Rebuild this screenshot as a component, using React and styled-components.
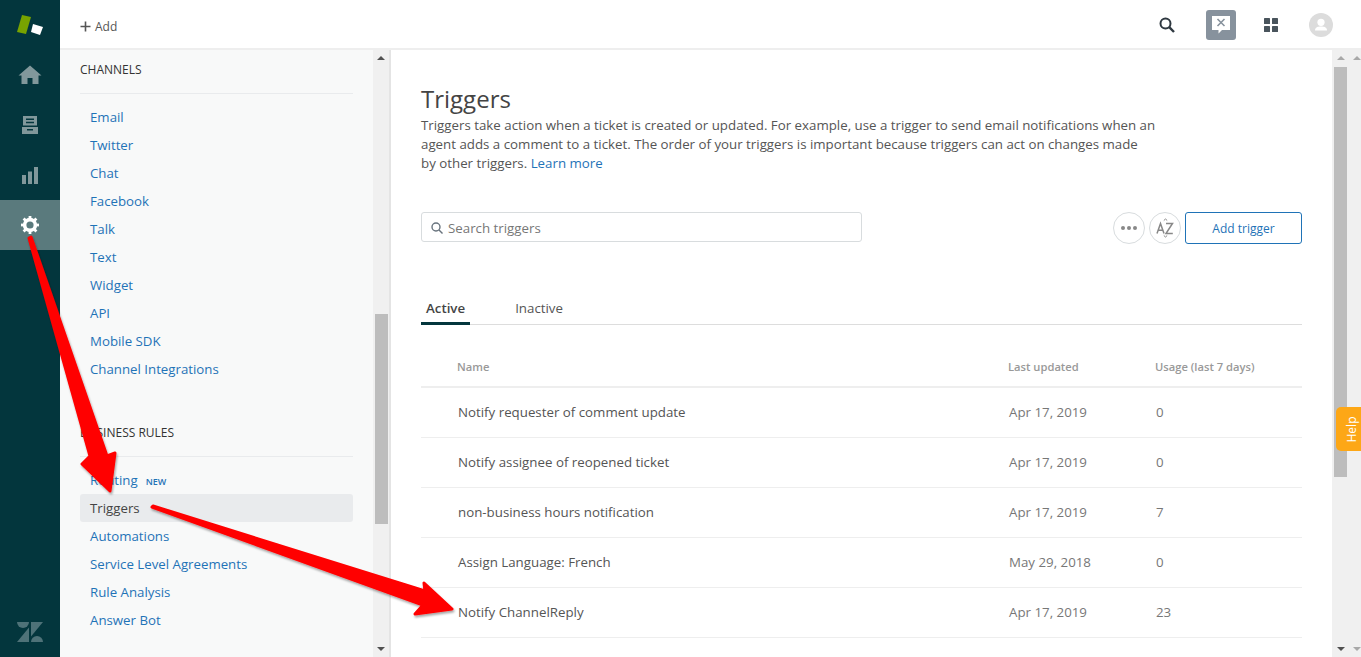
import styled, { createGlobalStyle } from "styled-components";
import { useState } from "react";

const GlobalStyle = createGlobalStyle`
  html, body {
    margin: 0;
    height: 100%;
    overflow: hidden;
    background: #fff;
  }
  * {
    box-sizing: border-box;
  }
  body {
    font-family: "Open Sans", "Noto Sans", sans-serif;
    font-size: 14px;
    color: #555;
  }
`;

const Page = styled.div`
  position: relative;
  display: flex;
  width: 1361px;
  height: 657px;
  overflow: hidden;
`;

const Rail = styled.nav`
  width: 60px;
  flex-shrink: 0;
  display: flex;
  flex-direction: column;
  background: #03363d;
`;
const RailLogo = styled.div`
  height: 50px;
  display: flex;
  align-items: center;
  justify-content: center;
`;
const RailItem = styled.div`
  height: 50px;
  display: flex;
  align-items: center;
  justify-content: center;
  background: ${(p) => (p.$active ? "#5a7a7d" : "transparent")};
  color: ${(p) => (p.$active ? "#fff" : "#81989b")};
`;
const RailFooter = styled.div`
  margin-top: auto;
  height: 35px;
  display: flex;
  justify-content: center;
  color: #4e7278;
`;

const Column = styled.div`
  flex: 1;
  min-width: 0;
  display: flex;
  flex-direction: column;
`;

const TopBar = styled.header`
  height: 50px;
  flex-shrink: 0;
  display: flex;
  align-items: center;
  padding: 2px 25px 0 20px;
  background: #fff;
  border-bottom: 2px solid #eee;
`;
const AddLink = styled.div`
  display: flex;
  align-items: center;
  gap: 4px;
  font-size: 12px;
  color: #555;
  padding-top: 3px;
`;
const TopIcons = styled.div`
  margin-left: auto;
  display: flex;
  align-items: center;
`;
const TopIcon = styled.div`
  width: 30px;
  height: 30px;
  display: flex;
  align-items: center;
  justify-content: center;
  margin-left: ${(p) => p.$gap}px;
  border-radius: 3px;
  background: ${(p) => p.$bg || "transparent"};
`;

const Body = styled.div`
  flex: 1;
  min-height: 0;
  display: flex;
`;

const Sidebar = styled.aside`
  width: 331px;
  flex-shrink: 0;
  display: flex;
  background: #f8f9f9;
  border-right: 2px solid #e4e4e4;
`;
const SideContent = styled.div`
  flex: 1;
  min-width: 0;
  padding: 0 20px 0 20px;
`;
const SideTitle = styled.h3`
  margin: 0;
  height: 44px;
  padding-top: 11px;
  font-size: 12px;
  line-height: 18px;
  font-weight: 500;
  color: #333;
  text-transform: uppercase;
  border-bottom: 1px solid #e9ebed;
`;
const SideList = styled.ul`
  list-style: none;
  margin: 0;
  padding: 9px 0 0;
  & + ${SideTitle} {
    margin-top: 30px;
  }
`;
const SideItem = styled.li`
  height: 28px;
  padding-left: 10px;
  display: flex;
  align-items: center;
  gap: 8px;
  border-radius: 3px;
  font-size: 13.25px;
  color: ${(p) => (p.$active ? "#444" : "#1f73b7")};
  background: ${(p) => (p.$active ? "#e9ebed" : "transparent")};
`;
const NewTag = styled.span`
  font-size: 9px;
  font-weight: 600;
  color: #1f73b7;
  padding-top: 2px;
`;

const Scrollbar = styled.div`
  width: ${(p) => p.$width}px;
  flex-shrink: 0;
  display: flex;
  flex-direction: column;
  align-items: center;
  background: #f0f0f0;
`;
const ScrollSpacer = styled.div`
  height: ${(p) => p.$height}px;
  flex-shrink: 0;
`;
const ScrollArrow = styled.div`
  width: 0;
  height: 0;
  margin: 6px 0;
  flex-shrink: 0;
  border-left: 4px solid transparent;
  border-right: 4px solid transparent;
  ${(p) =>
    p.$down
      ? `border-top: 4px solid ${p.$color};`
      : `border-bottom: 4px solid ${p.$color};`}
`;
const ScrollThumb = styled.div`
  width: 13px;
  height: ${(p) => p.$height}px;
  flex-shrink: 0;
  background: #bdbdbd;
`;
const ScrollFill = styled.div`
  flex: 1;
`;

const Main = styled.main`
  flex: 0 0 941px;
  padding: 34px 30px 0 30px;
  background: #fff;
`;
const Title = styled.h1`
  margin: 0;
  font-size: 24px;
  line-height: 30px;
  font-weight: 400;
  color: #444;
`;
const Description = styled.p`
  margin: 2px 0 0;
  font-size: 13.3px;
  line-height: 19px;
  color: #555;
  a {
    color: #1f73b7;
    text-decoration: none;
  }
`;
const ToolRow = styled.div`
  display: flex;
  align-items: flex-start;
  margin-top: 39px;
  height: 32px;
`;
const SearchBox = styled.div`
  width: 441px;
  height: 30px;
  display: flex;
  align-items: center;
  gap: 5px;
  padding: 1px 0 0 9px;
  border: 1px solid #d8dcde;
  border-radius: 3px;
  font-size: 13.3px;
  color: #777;
`;
const CircleButton = styled.div`
  width: 32px;
  height: 32px;
  display: flex;
  align-items: center;
  justify-content: center;
  margin-left: ${(p) => p.$gap}px;
  border: 1px solid #d8dcde;
  border-radius: 50%;
  color: #888;
`;
const AddButton = styled.div`
  width: 117px;
  height: 32px;
  margin-left: 4px;
  padding-top: 1px;
  display: flex;
  align-items: center;
  justify-content: center;
  border: 1px solid #1f73b7;
  border-radius: 3px;
  font-size: 12px;
  color: #1f73b7;
`;

const Tabs = styled.div`
  display: flex;
  margin-top: 48px;
  height: 33px;
  border-bottom: 1px solid #ddd;
`;
const Tab = styled.div`
  height: 33px;
  padding: 7px 5px 0;
  margin-right: ${(p) => p.$gap}px;
  font-size: 13.3px;
  font-weight: ${(p) => (p.$active ? 600 : 400)};
  color: ${(p) => (p.$active ? "#444" : "#555")};
  border-bottom: ${(p) => (p.$active ? "3px solid #03363d" : "none")};
`;

const Row = styled.div`
  display: grid;
  grid-template-columns: 551px 147px 1fr;
  height: ${(p) => (p.$head ? "63px" : "50px")};
  align-items: center;
  padding-left: ${(p) => (p.$head ? "36px" : "37px")};
  padding-top: ${(p) => (p.$head ? "22px" : "0")};
  padding-bottom: ${(p) => (p.$head ? "0" : "2px")};
  border-bottom: ${(p) => (p.$head ? "2px solid #eee" : "1px solid #eee")};
  font-size: ${(p) => (p.$head ? "11.2px" : "13.3px")};
  font-weight: ${(p) => (p.$head ? 600 : 400)};
  color: ${(p) => (p.$head ? "#999" : "#555")};
`;
const DimCell = styled.span`
  color: #777;
`;

const HelpTab = styled.div`
  position: absolute;
  left: 1336px;
  top: 407px;
  width: 25px;
  height: 44px;
  display: flex;
  align-items: center;
  justify-content: center;
  padding-left: 7px;
  border-radius: 5px 0 0 5px;
  background: #fda716;
  color: #fff;
  font-size: 12px;
  span {
    transform: rotate(-90deg);
  }
`;

const ArrowLayer = styled.svg`
  position: absolute;
  left: 0;
  top: 0;
  pointer-events: none;
`;

const channels = ["Email", "Twitter", "Chat", "Facebook", "Talk", "Text", "Widget", "API", "Mobile SDK", "Channel Integrations"];
const rules = ["Routing", "Triggers", "Automations", "Service Level Agreements", "Rule Analysis", "Answer Bot"];
const triggers = [
  { name: "Notify requester of comment update", date: "Apr 17, 2019", usage: 0 },
  { name: "Notify assignee of reopened ticket", date: "Apr 17, 2019", usage: 0 },
  { name: "non-business hours notification", date: "Apr 17, 2019", usage: 7 },
  { name: "Assign Language: French", date: "May 29, 2018", usage: 0 },
  { name: "Notify ChannelReply", date: "Apr 17, 2019", usage: 23 },
];

const App = () => {
  const [tab] = useState("Active");
  return (
    <Page>
      <GlobalStyle />
      <Rail>
        <RailLogo>
          <svg width="26" height="22" viewBox="0 0 26 22">
            <path d="M5 1 L14 3 L9 20 L0 18 Z" fill="#78a300" />
            <path d="M16 10 L26 13 L23 21 L14 18 Z" fill="#fff" />
          </svg>
        </RailLogo>
        <RailItem>
          <svg width="24" height="20" viewBox="0 0 24 20" fill="currentColor">
            <path d="M12 0.5 L23.5 10.5 L20.5 10.5 L20.5 19 L14.5 19 L14.5 13 L9.5 13 L9.5 19 L3.5 19 L3.5 10.5 L0.5 10.5 Z" />
          </svg>
        </RailItem>
        <RailItem>
          <svg width="18" height="18" viewBox="0 0 16 18" fill="currentColor">
            <path d="M0 11 H16 V18 H0 Z M5 13 V14.5 H11 V13 Z" fillRule="evenodd" />
            <path d="M1 0 H15 V9.5 H1 Z M4 2.5 V4 H12 V2.5 Z M4 5.8 V7.3 H12 V5.8 Z" fillRule="evenodd" />
          </svg>
        </RailItem>
        <RailItem>
          <svg width="16" height="17" viewBox="0 0 16 17" fill="currentColor">
            <rect x="0" y="8" width="4" height="9" />
            <rect x="6" y="4.5" width="4" height="12.5" />
            <rect x="12" y="0" width="4" height="17" />
          </svg>
        </RailItem>
        <RailItem $active>
          <svg width="20" height="20" viewBox="0 0 20 20">
            <circle cx="10" cy="10" r="5.4" fill="none" stroke="#fff" strokeWidth="3.6" />
            <g stroke="#fff" strokeWidth="2.8">
              <path d="M10 1 V4" />
              <path d="M10 16 V19" />
              <path d="M1 10 H4" />
              <path d="M16 10 H19" />
              <path d="M3.6 3.6 L5.8 5.8" />
              <path d="M14.2 14.2 L16.4 16.4" />
              <path d="M3.6 16.4 L5.8 14.2" />
              <path d="M14.2 5.8 L16.4 3.6" />
            </g>
          </svg>
        </RailItem>
        <RailFooter>
          <svg width="26" height="20" viewBox="0 0 26 20" fill="currentColor">
            <path d="M12 5.5 V20 H0 Z" />
            <path d="M12 0 A6 6 0 0 1 0 0 Z" />
            <path d="M14 14.5 V0 H26 Z" />
            <path d="M14 20 A6 6 0 0 1 26 20 Z" />
          </svg>
        </RailFooter>
      </Rail>

      <Column>
        <TopBar>
          <AddLink>
            <svg width="11" height="11" viewBox="0 0 11 11" stroke="#555" strokeWidth="1.6">
              <path d="M5.5 0.5 V10.5 M0.5 5.5 H10.5" />
            </svg>
            Add
          </AddLink>
          <TopIcons>
            <TopIcon>
              <svg width="16" height="16" viewBox="0 0 16 16" fill="none" stroke="#2f3941" strokeWidth="2">
                <circle cx="6.5" cy="6.5" r="5" />
                <path d="M10.2 10.2 L15 15" strokeWidth="2.4" />
              </svg>
            </TopIcon>
            <TopIcon $gap={24} $bg="#87929d">
              <svg width="20" height="20" viewBox="0 0 20 20">
                <path d="M1 1 H19 V15 H11 L7.5 18.5 V15 H1 Z" fill="#fff" />
                <path d="M6.5 4 L13.5 11 M13.5 4 L6.5 11" stroke="#87929d" strokeWidth="1.6" />
              </svg>
            </TopIcon>
            <TopIcon $gap={20}>
              <svg width="14" height="14" viewBox="0 0 14 14" fill="#49545c">
                <rect x="0" y="0" width="6" height="6" rx="0.6" />
                <rect x="8" y="0" width="6" height="6" rx="0.6" />
                <rect x="0" y="8" width="6" height="6" rx="0.6" />
                <rect x="8" y="8" width="6" height="6" rx="0.6" />
              </svg>
            </TopIcon>
            <TopIcon $gap={20}>
              <svg width="24" height="24" viewBox="0 0 24 24">
                <circle cx="12" cy="12" r="12" fill="#dcdcdc" />
                <circle cx="12" cy="9.3" r="3.6" fill="#fff" />
                <path d="M6 17.5 C6 14 9 13.5 12 13.5 C15 13.5 18 14 18 17.5 Z" fill="#fff" />
              </svg>
            </TopIcon>
          </TopIcons>
        </TopBar>

        <Body>
          <Sidebar>
            <SideContent>
              <SideTitle>Channels</SideTitle>
              <SideList>
                {channels.map((c) => (
                  <SideItem key={c}>{c}</SideItem>
                ))}
              </SideList>
              <SideTitle>Business Rules</SideTitle>
              <SideList>
                {rules.map((r) => (
                  <SideItem key={r} $active={r === "Triggers"}>
                    {r}
                    {r === "Routing" && <NewTag>NEW</NewTag>}
                  </SideItem>
                ))}
              </SideList>
            </SideContent>
            <Scrollbar $width={16}>
              <ScrollArrow $color="#505050" />
              <ScrollSpacer $height={248} />
              <ScrollThumb $height={210} />
              <ScrollFill />
              <ScrollArrow $down $color="#505050" />
            </Scrollbar>
          </Sidebar>

          <Main>
            <Title>Triggers</Title>
            <Description>
              Triggers take action when a ticket is created or updated. For example, use a trigger to send email notifications when an
              <br />
              agent adds a comment to a ticket. The order of your triggers is important because triggers can act on changes made
              <br />
              by other triggers. <a href="#learn">Learn more</a>
            </Description>
            <ToolRow>
              <SearchBox>
                <svg width="12" height="12" viewBox="0 0 12 12" fill="none" stroke="#68737d" strokeWidth="1.4">
                  <circle cx="5" cy="5" r="4" />
                  <path d="M8 8 L11.5 11.5" />
                </svg>
                Search triggers
              </SearchBox>
              <CircleButton $gap={251}>
                <svg width="16" height="4" viewBox="0 0 16 4" fill="currentColor">
                  <circle cx="2" cy="2" r="2" />
                  <circle cx="8" cy="2" r="2" />
                  <circle cx="14" cy="2" r="2" />
                </svg>
              </CircleButton>
              <CircleButton $gap={4}>
                <svg width="18" height="20" viewBox="0 0 18 20" fill="none" stroke="currentColor" strokeWidth="1.5">
                  <path d="M1 15.5 L4.5 5.5 L8 15.5 M2.2 12.2 H6.8" />
                  <path d="M10 5.5 H16.5 L10 15.5 H16.8" />
                  <path d="M7.8 2.5 L9.5 1 L11.2 2.5 M7.8 17.5 L9.5 19 L11.2 17.5" strokeWidth="1" />
                </svg>
              </CircleButton>
              <AddButton>Add trigger</AddButton>
            </ToolRow>
            <Tabs>
              <Tab $active={tab === "Active"} $gap={40}>Active</Tab>
              <Tab $active={tab === "Inactive"}>Inactive</Tab>
            </Tabs>
            <Row $head>
              <span>Name</span>
              <span>Last updated</span>
              <span>Usage (last 7 days)</span>
            </Row>
            {triggers.map((t) => (
              <Row key={t.name}>
                <span>{t.name}</span>
                <DimCell>{t.date}</DimCell>
                <DimCell>{t.usage}</DimCell>
              </Row>
            ))}
          </Main>

          <Scrollbar $width={17}>
            <ScrollArrow $color="#a8a8a8" />
            <ScrollSpacer $height={1} />
            <ScrollThumb $height={410} />
            <ScrollFill />
            <ScrollArrow $down $color="#505050" />
          </Scrollbar>
          <Scrollbar $width={16}>
            <ScrollArrow $color="#a8a8a8" />
            <ScrollFill />
            <ScrollArrow $down $color="#a8a8a8" />
          </Scrollbar>
        </Body>
      </Column>

      <HelpTab>
        <span>Help</span>
      </HelpTab>

      <ArrowLayer width="1361" height="657" viewBox="0 0 1361 657">
        <defs>
          <filter id="arrowShadow" x="-10%" y="-10%" width="120%" height="120%">
            <feDropShadow dx="1" dy="2" stdDeviation="1" floodColor="#000" floodOpacity="0.35" />
          </filter>
        </defs>
        <g fill="#f00" stroke="#f00" strokeWidth="3" strokeLinejoin="round" filter="url(#arrowShadow)">
          <path d="M29 238 L31 237 L107 456 L115 453 L110 491 L82 464 L90 456 Z" />
          <path d="M152 507 L153 506 L425 591 L424 583 L452 609 L415 614 L423 605 Z" />
        </g>
      </ArrowLayer>
    </Page>
  );
};

export default App;
